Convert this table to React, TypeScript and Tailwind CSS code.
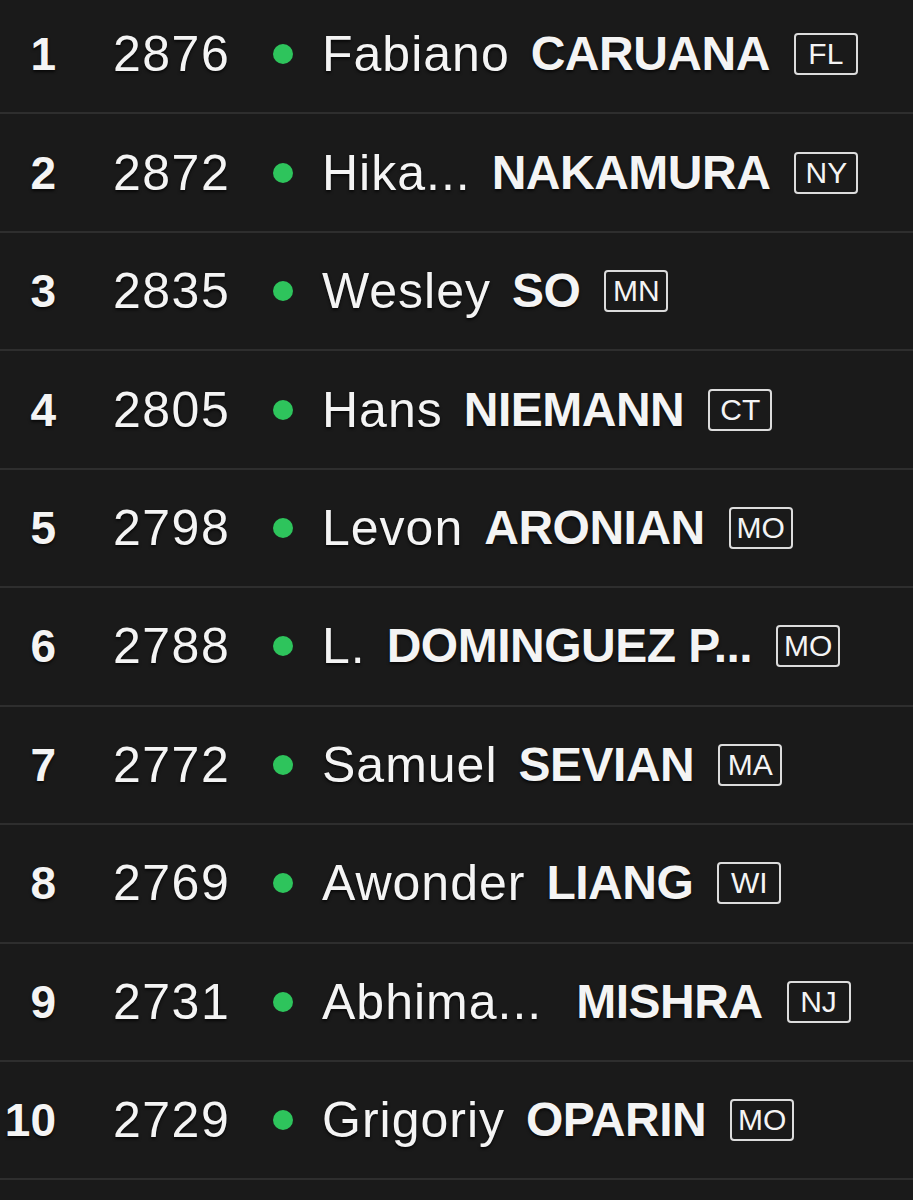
const players = [
  { rank: 1, rating: 2876, first: 'Fabiano', last: 'CARUANA', state: 'FL' },
  { rank: 2, rating: 2872, first: 'Hika...', last: 'NAKAMURA', state: 'NY' },
  { rank: 3, rating: 2835, first: 'Wesley', last: 'SO', state: 'MN' },
  { rank: 4, rating: 2805, first: 'Hans', last: 'NIEMANN', state: 'CT' },
  { rank: 5, rating: 2798, first: 'Levon', last: 'ARONIAN', state: 'MO' },
  { rank: 6, rating: 2788, first: 'L.', last: 'DOMINGUEZ P...', state: 'MO' },
  { rank: 7, rating: 2772, first: 'Samuel', last: 'SEVIAN', state: 'MA' },
  { rank: 8, rating: 2769, first: 'Awonder', last: 'LIANG', state: 'WI' },
  { rank: 9, rating: 2731, first: 'Abhima...', last: 'MISHRA', state: 'NJ', wide: true },
  { rank: 10, rating: 2729, first: 'Grigoriy', last: 'OPARIN', state: 'MO' },
];

export default function App() {
  return (
    <div
      className="min-h-[1200px] w-[913px] overflow-hidden bg-[#1a1a1a] text-[#f4f4f4]"
      style={{ fontFamily: '"Liberation Sans", Arial, sans-serif' }}
    >
      <div className="-mt-[4px]">
        {players.map((p) => (
          <div
            key={p.rank}
            className="flex h-[118.45px] items-center border-b-2 border-[#2e2e2e] [text-shadow:0_2px_3px_rgba(0,0,0,0.7)]"
          >
            {/* rank */}
            <div className="w-[56px] shrink-0 text-right text-[46px] font-bold leading-none">{p.rank}</div>
            {/* rating */}
            <div className="ml-[57px] w-[160px] shrink-0 text-[50px] leading-none tracking-[1.5px]">{p.rating}</div>
            {/* online dot */}
            <div className="h-5 w-5 shrink-0 rounded-full bg-[#2ec45c]"></div>
            {/* name */}
            <div className="ml-[29px] flex items-center whitespace-nowrap leading-none">
              <span className={p.wide ? 'mr-[34px] text-[50px] tracking-[1px]' : 'mr-[21px] text-[50px] tracking-[1px]'}>
                {p.first}
              </span>
              <span className="text-[48px] font-bold tracking-[-0.5px]">{p.last}</span>
              <span className="ml-[24px] flex h-[42px] w-[64px] items-center justify-center rounded-[4px] border-2 border-[#dcdcdc] text-[30px] leading-none [text-shadow:none]">
                {p.state}
              </span>
            </div>
          </div>
        ))}
      </div>
    </div>
  );
}
